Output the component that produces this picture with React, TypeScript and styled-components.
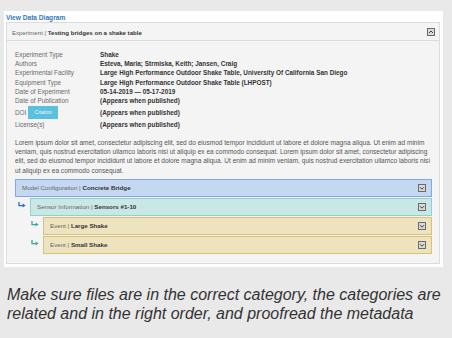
import styled, { createGlobalStyle } from "styled-components";

const GlobalStyle = createGlobalStyle`
  html, body {
    margin: 0;
    padding: 0;
    background: #e9e9e9;
  }
  body {
    font-family: "Liberation Sans", Arial, Helvetica, sans-serif;
  }
`;

const meta = [
  { label: "Experiment Type", value: "Shake" },
  { label: "Authors", value: "Esteva, Maria; Strmiska, Keith; Jansen, Craig" },
  {
    label: "Experimental Facility",
    value: "Large High Performance Outdoor Shake Table, University Of California San Diego",
  },
  { label: "Equipment Type", value: "Large High Performance Outdoor Shake Table (LHPOST)" },
  { label: "Date of Experiment", value: "05-14-2019 — 05-17-2019" },
  { label: "Date of Publication", value: "(Appears when published)" },
  { label: "DOI", value: "(Appears when published)", citation: true },
  { label: "License(s)", value: "(Appears when published)" },
];

const lorem = [
  "Lorem ipsum dolor sit amet, consectetur adipiscing elit, sed do eiusmod tempor incididunt ut labore et dolore magna aliqua. Ut enim ad minim",
  "veniam, quis nostrud exercitation ullamco laboris nisi ut aliquip ex ea commodo consequat. Lorem ipsum dolor sit amet, consectetur adipiscing",
  "elit, sed do eiusmod tempor incididunt ut labore et dolore magna aliqua. Ut enim ad minim veniam, quis nostrud exercitation ullamco laboris nisi",
  "ut aliquip ex ea commodo consequat.",
];

type Kind = "model" | "sensor" | "event";

const tree: { kind: Kind; type: string; name: string; depth: number }[] = [
  { kind: "model", type: "Model Configuration", name: "Concrete Bridge", depth: 0 },
  { kind: "sensor", type: "Sensor Information", name: "Sensors #1-10", depth: 1 },
  { kind: "event", type: "Event", name: "Large Shake", depth: 2 },
  { kind: "event", type: "Event", name: "Small Shake", depth: 2 },
];

const palette = {
  model: { bg: "#c5d8f1", border: "#80aade", arrow: "#2b6cc4" },
  sensor: { bg: "#c9e8e5", border: "#92d0c9", arrow: "#2b6cc4" },
  event: { bg: "#eee3bf", border: "#d8c277", arrow: "#3aa89a" },
};

const ToggleIcon = ({ up }: { up?: boolean }) => (
  <svg width="8" height="8" viewBox="0 0 8 8">
    <rect x="0.5" y="0.5" width="7" height="7" fill="#d9d9d9" stroke="#6a6a6a" />
    <polyline
      points={up ? "2,5 4,3 6,5" : "2,3.2 4,5.2 6,3.2"}
      fill="none"
      stroke="#3d3d3d"
      strokeWidth="1"
    />
  </svg>
);

const ChildArrow = ({ color }: { color: string }) => (
  <svg width="8" height="6" viewBox="0 0 8 6">
    <path d="M1 0 V3.6 H5" fill="none" stroke={color} strokeWidth="1.3" />
    <path d="M4.6 1.6 L7.6 3.6 L4.6 5.6 Z" fill={color} />
  </svg>
);

const App = () => {
  return (
    <Page>
      <GlobalStyle />
      <Panel>
        <DiagramLink>View Data Diagram</DiagramLink>
        <Card>
          <CardHeader>
            <HeaderTitle>
              Experiment | <strong>Testing bridges on a shake table</strong>
            </HeaderTitle>
            <ToggleIcon up />
          </CardHeader>
          <CardBody>
            <MetaTable>
              {meta.map((row) => (
                <MetaRow key={row.label} $tall={!!row.citation}>
                  <MetaLabel>
                    {row.label}
                    {row.citation && <CitationButton>Citation</CitationButton>}
                  </MetaLabel>
                  <MetaValue>{row.value}</MetaValue>
                </MetaRow>
              ))}
            </MetaTable>
            <Description>
              {lorem.map((line) => (
                <DescLine key={line}>{line}</DescLine>
              ))}
            </Description>
            <Tree>
              {tree.map((node) => (
                <TreeRow key={node.name}>
                  {node.depth > 0 && (
                    <Indent $width={node.depth === 1 ? 15 : 28}>
                      <ChildArrow color={palette[node.kind].arrow} />
                    </Indent>
                  )}
                  <Bar $kind={node.kind}>
                    <BarTitle>
                      {node.type} | <strong>{node.name}</strong>
                    </BarTitle>
                    <ToggleIcon />
                  </Bar>
                </TreeRow>
              ))}
            </Tree>
          </CardBody>
        </Card>
      </Panel>
      <Caption>
        Make sure files are in the correct category, the categories are
        <br />
        related and in the right order, and proofread the metadata
      </Caption>
    </Page>
  );
};

export default App;

const Page = styled.div`
  width: 452px;
  height: 338px;
  padding-top: 11px;
  box-sizing: border-box;
  overflow: hidden;
`;

const Panel = styled.div`
  margin-left: 4px;
  width: 439px;
  background: #fff;
  padding: 2px 3px 3px 2px;
  box-sizing: border-box;
`;

const DiagramLink = styled.a`
  display: block;
  height: 9px;
  line-height: 9px;
  font-size: 6.6px;
  font-weight: bold;
  color: #3579b8;
  cursor: pointer;
`;

const Card = styled.div`
  background: #f4f4f4;
  border: 1px solid #dcdcdc;
`;

const CardHeader = styled.div`
  height: 17px;
  display: flex;
  align-items: center;
  justify-content: space-between;
  padding: 0 4px 0 5px;
  border-bottom: 1px solid #dcdcdc;
`;

const HeaderTitle = styled.div`
  font-size: 6.1px;
  color: #666;
  padding-top: 2px;

  strong {
    color: #333;
  }
`;

const CardBody = styled.div`
  padding: 9px 7px 9px 8px;
`;

const MetaTable = styled.div`
  display: flex;
  flex-direction: column;
`;

const MetaRow = styled.div<{ $tall: boolean }>`
  display: grid;
  grid-template-columns: 85px 1fr;
  align-items: center;
  height: ${(p) => (p.$tall ? "14.6px" : "9.2px")};
  font-size: 6.4px;
`;

const MetaLabel = styled.div`
  display: flex;
  align-items: center;
  color: #6b6b6b;
`;

const MetaValue = styled.div`
  color: #333;
  font-weight: bold;
  white-space: nowrap;
`;

const CitationButton = styled.span`
  display: inline-flex;
  align-items: center;
  justify-content: center;
  width: 30px;
  height: 13px;
  margin-left: 2px;
  background: #5bc0de;
  color: #eaf7fb;
  font-size: 5.2px;
`;

const Description = styled.p`
  margin: 9px 0 0;
  font-size: 6.55px;
  line-height: 9.2px;
  color: #555;
`;

const DescLine = styled.span`
  display: block;
  white-space: nowrap;
`;

const Tree = styled.div`
  margin-top: 4px;
  display: flex;
  flex-direction: column;
  gap: 1px;
`;

const TreeRow = styled.div`
  display: flex;
`;

const Indent = styled.div<{ $width: number }>`
  width: ${(p) => p.$width}px;
  flex-shrink: 0;
  display: flex;
  justify-content: flex-end;
  align-items: flex-start;
  padding: 4px 4px 0 0;
  box-sizing: border-box;
`;

const Bar = styled.div<{ $kind: Kind }>`
  flex: 1;
  height: 18px;
  box-sizing: border-box;
  display: flex;
  align-items: center;
  justify-content: space-between;
  padding: 0 5px 0 6px;
  background: ${(p) => palette[p.$kind].bg};
  border: 1px solid ${(p) => palette[p.$kind].border};
`;

const BarTitle = styled.div`
  font-size: 6.2px;
  color: #666;

  strong {
    color: #333;
  }
`;

const Caption = styled.p`
  margin: 18px 0 0 7px;
  font-size: 16px;
  line-height: 19px;
  font-style: italic;
  color: #333;
  white-space: nowrap;
`;
